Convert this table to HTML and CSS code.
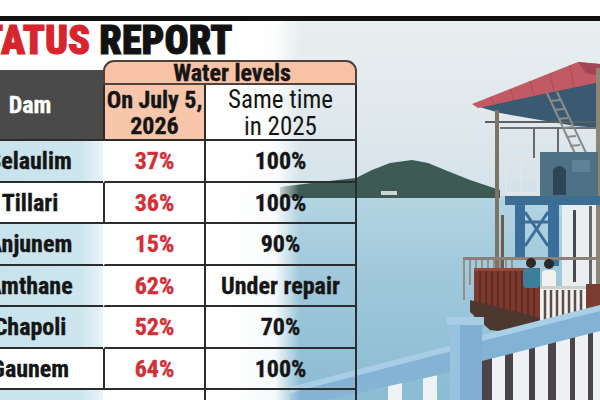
FILE: index.html
```html
<!DOCTYPE html>
<html lang="en">
<head>
<meta charset="utf-8">
<title>Status report</title>
<link rel="stylesheet" href="styles.css">
</head>
<body>
<div class="rule"></div>
<div class="stage">
  <svg class="photo" viewBox="230 21 370 379" width="370" height="379" aria-hidden="true">
    <defs>
      <linearGradient id="sky" x1="0" y1="0" x2="0" y2="1">
        <stop offset="0" stop-color="#e9eef0"/>
        <stop offset="0.6" stop-color="#dfe8ec"/>
        <stop offset="1" stop-color="#d2e2ea"/>
      </linearGradient>
      <linearGradient id="water" x1="0" y1="0" x2="0" y2="1">
        <stop offset="0" stop-color="#b4d5e3"/>
        <stop offset="0.4" stop-color="#9fc8da"/>
        <stop offset="1" stop-color="#8bbcd3"/>
      </linearGradient>
      <linearGradient id="fade" x1="230" y1="0" x2="310" y2="0" gradientUnits="userSpaceOnUse">
        <stop offset="0" stop-color="#fff" stop-opacity="1"/>
        <stop offset="0.56" stop-color="#fff" stop-opacity="0.92"/>
        <stop offset="0.87" stop-color="#fff" stop-opacity="0"/>
        <stop offset="1" stop-color="#fff" stop-opacity="0"/>
      </linearGradient>
    </defs>
    <rect x="230" y="21" width="370" height="177" fill="url(#sky)"/>
    <rect x="230" y="196" width="370" height="204" fill="url(#water)"/>
    <path d="M280,187 L320,182 L356,178 L372,170 L390,163 L412,160 L428,163 L445,170 L470,180 L500,190 L500,198 L280,198 Z" fill="#3d5a55"/>
    <rect x="381" y="191" width="16" height="4" fill="#cdd8d2"/>
    <!-- roof -->
    <polygon points="476,106 600,78 600,128 575,126 500,113" fill="#3a5a72"/>
    <polygon points="472,104 578,62 600,64 600,82 478,108" fill="#c25a66"/>
    <polygon points="578,62 600,64 600,76 586,73" fill="#a44556"/>
    <g stroke="#ad4a58" stroke-width="1">
      <line x1="490" y1="97" x2="494" y2="104"/>
      <line x1="510" y1="89" x2="514" y2="100"/>
      <line x1="530" y1="81" x2="534" y2="96"/>
      <line x1="550" y1="73" x2="554" y2="92"/>
      <line x1="570" y1="65" x2="574" y2="88"/>
    </g>
    <!-- frame -->
    <rect x="485" y="121" width="115" height="2" fill="#5b5f60"/>
    <rect x="500" y="127" width="100" height="2" fill="#6b6f70"/>
    <rect x="495" y="110" width="4" height="165" fill="#7b7566"/>
    <rect x="596" y="68" width="4" height="332" fill="#8d8672"/>
    <rect x="533" y="127" width="2" height="33" fill="#6a6a6a"/>
    <rect x="557" y="127" width="2" height="33" fill="#6a6a6a"/>
    <g stroke="#8b8b88" stroke-width="2">
      <line x1="547" y1="93" x2="578" y2="160"/>
      <line x1="557" y1="92" x2="588" y2="157"/>
      <line x1="550" y1="101" x2="560" y2="100"/>
      <line x1="554" y1="110" x2="564" y2="109"/>
      <line x1="558" y1="119" x2="568" y2="118"/>
      <line x1="562" y1="128" x2="572" y2="127"/>
      <line x1="566" y1="137" x2="576" y2="136"/>
      <line x1="570" y1="146" x2="580" y2="145"/>
      <line x1="574" y1="155" x2="584" y2="154"/>
    </g>
    <g fill="#e1e5e6">
      <rect x="505" y="158" width="35" height="3"/>
      <rect x="505" y="175" width="35" height="2"/>
      <rect x="505" y="192" width="35" height="3"/>
      <rect x="505" y="158" width="2" height="37"/>
      <rect x="520" y="158" width="2" height="37"/>
      <rect x="537" y="158" width="2" height="37"/>
    </g>
    <rect x="540" y="152" width="58" height="45" fill="#4e7186"/>
    <path d="M553,195 L553,170 Q559,162 566,170 L566,195 Z" fill="#2d4557"/>
    <rect x="572" y="160" width="18" height="12" fill="#5f8396"/>
    <!-- tower -->
    <rect x="505" y="196" width="95" height="9" fill="#3d6d92"/>
    <rect x="562" y="205" width="34" height="82" fill="#e9eef0"/>
    <rect x="515" y="204" width="10" height="56" fill="#3b6e9b"/>
    <rect x="548" y="204" width="11" height="62" fill="#3b6e9b"/>
    <g stroke="#3b6e9b" stroke-width="3">
      <line x1="525" y1="212" x2="548" y2="246"/>
      <line x1="525" y1="246" x2="548" y2="212"/>
      <line x1="525" y1="222" x2="548" y2="222"/>
    </g>
    <rect x="573" y="210" width="3" height="72" fill="#4a4a4a"/>
    <rect x="589" y="206" width="3" height="80" fill="#666"/>
    <rect x="501" y="215" width="3" height="75" fill="#6d5a50"/>
    <!-- upper grey rail -->
    <rect x="463" y="257" width="137" height="3" fill="#8c8078"/>
    <g stroke="#8c7c72" stroke-width="1.5">
      <line x1="464" y1="258" x2="464" y2="300"/>
      <line x1="470" y1="258" x2="470" y2="285"/>
      <line x1="476" y1="258" x2="476" y2="285"/>
      <line x1="482" y1="258" x2="482" y2="285"/>
      <line x1="488" y1="258" x2="488" y2="285"/>
      <line x1="494" y1="258" x2="494" y2="285"/>
      <line x1="500" y1="258" x2="500" y2="285"/>
      <line x1="506" y1="258" x2="506" y2="285"/>
      <line x1="512" y1="258" x2="512" y2="285"/>
    </g>
    <!-- rust cage -->
    <rect x="474" y="268" width="66" height="52" fill="#7b3a2f"/>
    <rect x="474" y="268" width="66" height="3" fill="#94483a"/>
    <g stroke="#592820" stroke-width="1.5">
      <line x1="480" y1="271" x2="480" y2="320"/>
      <line x1="486" y1="271" x2="486" y2="320"/>
      <line x1="492" y1="271" x2="492" y2="320"/>
      <line x1="498" y1="271" x2="498" y2="320"/>
      <line x1="504" y1="271" x2="504" y2="320"/>
      <line x1="510" y1="271" x2="510" y2="320"/>
      <line x1="516" y1="271" x2="516" y2="320"/>
      <line x1="522" y1="271" x2="522" y2="320"/>
      <line x1="528" y1="271" x2="528" y2="320"/>
      <line x1="534" y1="271" x2="534" y2="320"/>
    </g>
    <polygon points="470,300 540,318 540,336 490,330 470,312" fill="#4c382f"/>
    <!-- people -->
    <rect x="523" y="268" width="17" height="20" rx="4" fill="#3c7f9b"/>
    <circle cx="531" cy="263" r="5" fill="#2d2a28"/>
    <rect x="542" y="270" width="14" height="30" rx="4" fill="#f1f1ee"/>
    <circle cx="549" cy="264" r="5" fill="#2b2826"/>
    <!-- white rail -->
    <rect x="540" y="287" width="46" height="35" fill="#f2f2ef"/>
    <rect x="540" y="286" width="46" height="3" fill="#cfcfcb"/>
    <g stroke="#5a4e4c" stroke-width="2.5">
      <line x1="545" y1="290" x2="545" y2="322"/>
      <line x1="551" y1="290" x2="551" y2="322"/>
      <line x1="557" y1="290" x2="557" y2="322"/>
      <line x1="563" y1="290" x2="563" y2="322"/>
      <line x1="569" y1="290" x2="569" y2="322"/>
      <line x1="575" y1="290" x2="575" y2="322"/>
      <line x1="581" y1="290" x2="581" y2="322"/>
    </g>
    <rect x="586" y="284" width="14" height="32" fill="#7a3b30"/>
    <!-- bottom railing, left section -->
    <rect x="388" y="380" width="14" height="20" fill="#eef2f5"/>
    <rect x="423" y="372" width="14" height="28" fill="#eef2f5"/>
    <polygon points="290,392 452,350 452,372 290,408" fill="#84b3d4"/>
    <polygon points="290,387 452,345 452,351 290,393" fill="#a8cde6"/>
    <!-- bottom railing, right section -->
    <polygon points="482,357 600,328 600,400 482,400" fill="#4a4448"/>
    <g fill="#eef1f4">
      <rect x="492" y="340" width="13" height="60"/>
      <rect x="513" y="336" width="16" height="64"/>
      <rect x="535" y="332" width="13" height="68"/>
      <rect x="556" y="328" width="14" height="72"/>
      <rect x="575" y="324" width="13" height="76"/>
      <rect x="593" y="320" width="7" height="80"/>
    </g>
    <polygon points="482,339 600,309 600,331 482,361" fill="#82b2d4"/>
    <polygon points="482,335 600,305 600,311 482,341" fill="#a9cfe7"/>
    <rect x="450" y="322" width="32" height="78" fill="#7fb0d4"/>
    <rect x="450" y="322" width="10" height="78" fill="#98c3e0"/>
    <rect x="447" y="317" width="37" height="8" fill="#a7cde6"/>
    <rect x="230" y="21" width="80" height="379" fill="url(#fade)"/>
  </svg>

  <div class="content">
    <h1 class="title"><span class="red">STATUS</span> REPORT</h1>
    <div class="levels">
      <div class="cell dam">Dam</div>
      <div class="cell water">Water levels</div>
      <div class="cell july">On July 5,<br>2026</div>
      <div class="cell same">Same time<br>in 2025</div>

      <div class="cell name blue">Selaulim</div>
      <div class="cell now open">37%</div>
      <div class="cell then">100%</div>

      <div class="cell name">Tillari</div>
      <div class="cell now">36%</div>
      <div class="cell then">100%</div>

      <div class="cell name blue">Anjunem</div>
      <div class="cell now open">15%</div>
      <div class="cell then">90%</div>

      <div class="cell name blue">Amthane</div>
      <div class="cell now open">62%</div>
      <div class="cell then">Under repair</div>

      <div class="cell name blue">Chapoli</div>
      <div class="cell now open">52%</div>
      <div class="cell then">70%</div>

      <div class="cell name">Gaunem</div>
      <div class="cell now">64%</div>
      <div class="cell then">100%</div>

      <div class="cell name blue"></div>
      <div class="cell now open"></div>
      <div class="cell then"></div>
    </div>
  </div>
</div>
</body>
</html>
```
FILE: styles.css
```css
html, body {
  margin: 0;
  padding: 0;
}

body {
  width: 600px;
  height: 400px;
  overflow: hidden;
  background: #fff;
  color: #151515;
  font-family: "Roboto Condensed", "Liberation Sans", sans-serif;
}

.rule {
  height: 5px;
  margin-top: 16px;
  background: #111;
}

.stage {
  display: grid;
  height: 379px;
  overflow: hidden;
}

.photo {
  grid-area: 1 / 1;
  justify-self: end;
  display: block;
}

.content {
  grid-area: 1 / 1;
}

.title {
  margin: 0 0 0 -41px;
  padding-top: 1px;
  font-size: 40px;
  line-height: 38px;
  font-weight: 900;
  white-space: nowrap;
  color: #121212;
  -webkit-text-stroke: 1px currentColor;
}

.title .red {
  color: #d6252d;
}

.levels {
  display: grid;
  width: 400px;
  margin-left: -43px;
  grid-template-columns: 146px 103px 151px;
  grid-template-rows: 25px 56px 42px 41px 42px 41px 42px 41px 40px;
}

.cell {
  box-sizing: border-box;
  display: flex;
  align-items: center;
  justify-content: center;
  text-align: center;
  font-size: 24px;
  font-weight: 700;
  line-height: 26px;
  border-bottom: 2px solid #2c2c2c;
  -webkit-text-stroke: 0.35px currentColor;
}

.dam {
  grid-row: 1 / 3;
  padding-top: 10px;
  color: #fff;
  background: linear-gradient(to bottom, #fff 0 10px, #4a4a4a 10px);
}

.water {
  grid-column: 2 / 4;
  border: 2px solid #4e403b;
  border-radius: 11px 11px 0 0;
  background: #f7c2a6;
  padding-left: 4px;
}

.july {
  background: #f7c6ab;
  border-left: 2px solid #2c2c2c;
  border-right: 2px solid #2c2c2c;
  padding-top: 2px;
}

.same {
  font-size: 25px;
  line-height: 27px;
  font-weight: 400;
  border-right: 2px solid #2c2c2c;
  padding-top: 2px;
  -webkit-text-stroke: 0;
}

.name {
  background: #fff;
}

.name.blue {
  background: linear-gradient(to right, #c4e1eb 0%, #cde6ee 85%, #e8f4f8 100%);
}

.now {
  color: #d22f36;
  background: #fff;
  border-left: 2px solid #2c2c2c;
  border-right: 2px solid #2c2c2c;
}

.now.open {
  border-left-color: #fff;
}

.then {
  border-right: 2px solid #2c2c2c;
}
```
